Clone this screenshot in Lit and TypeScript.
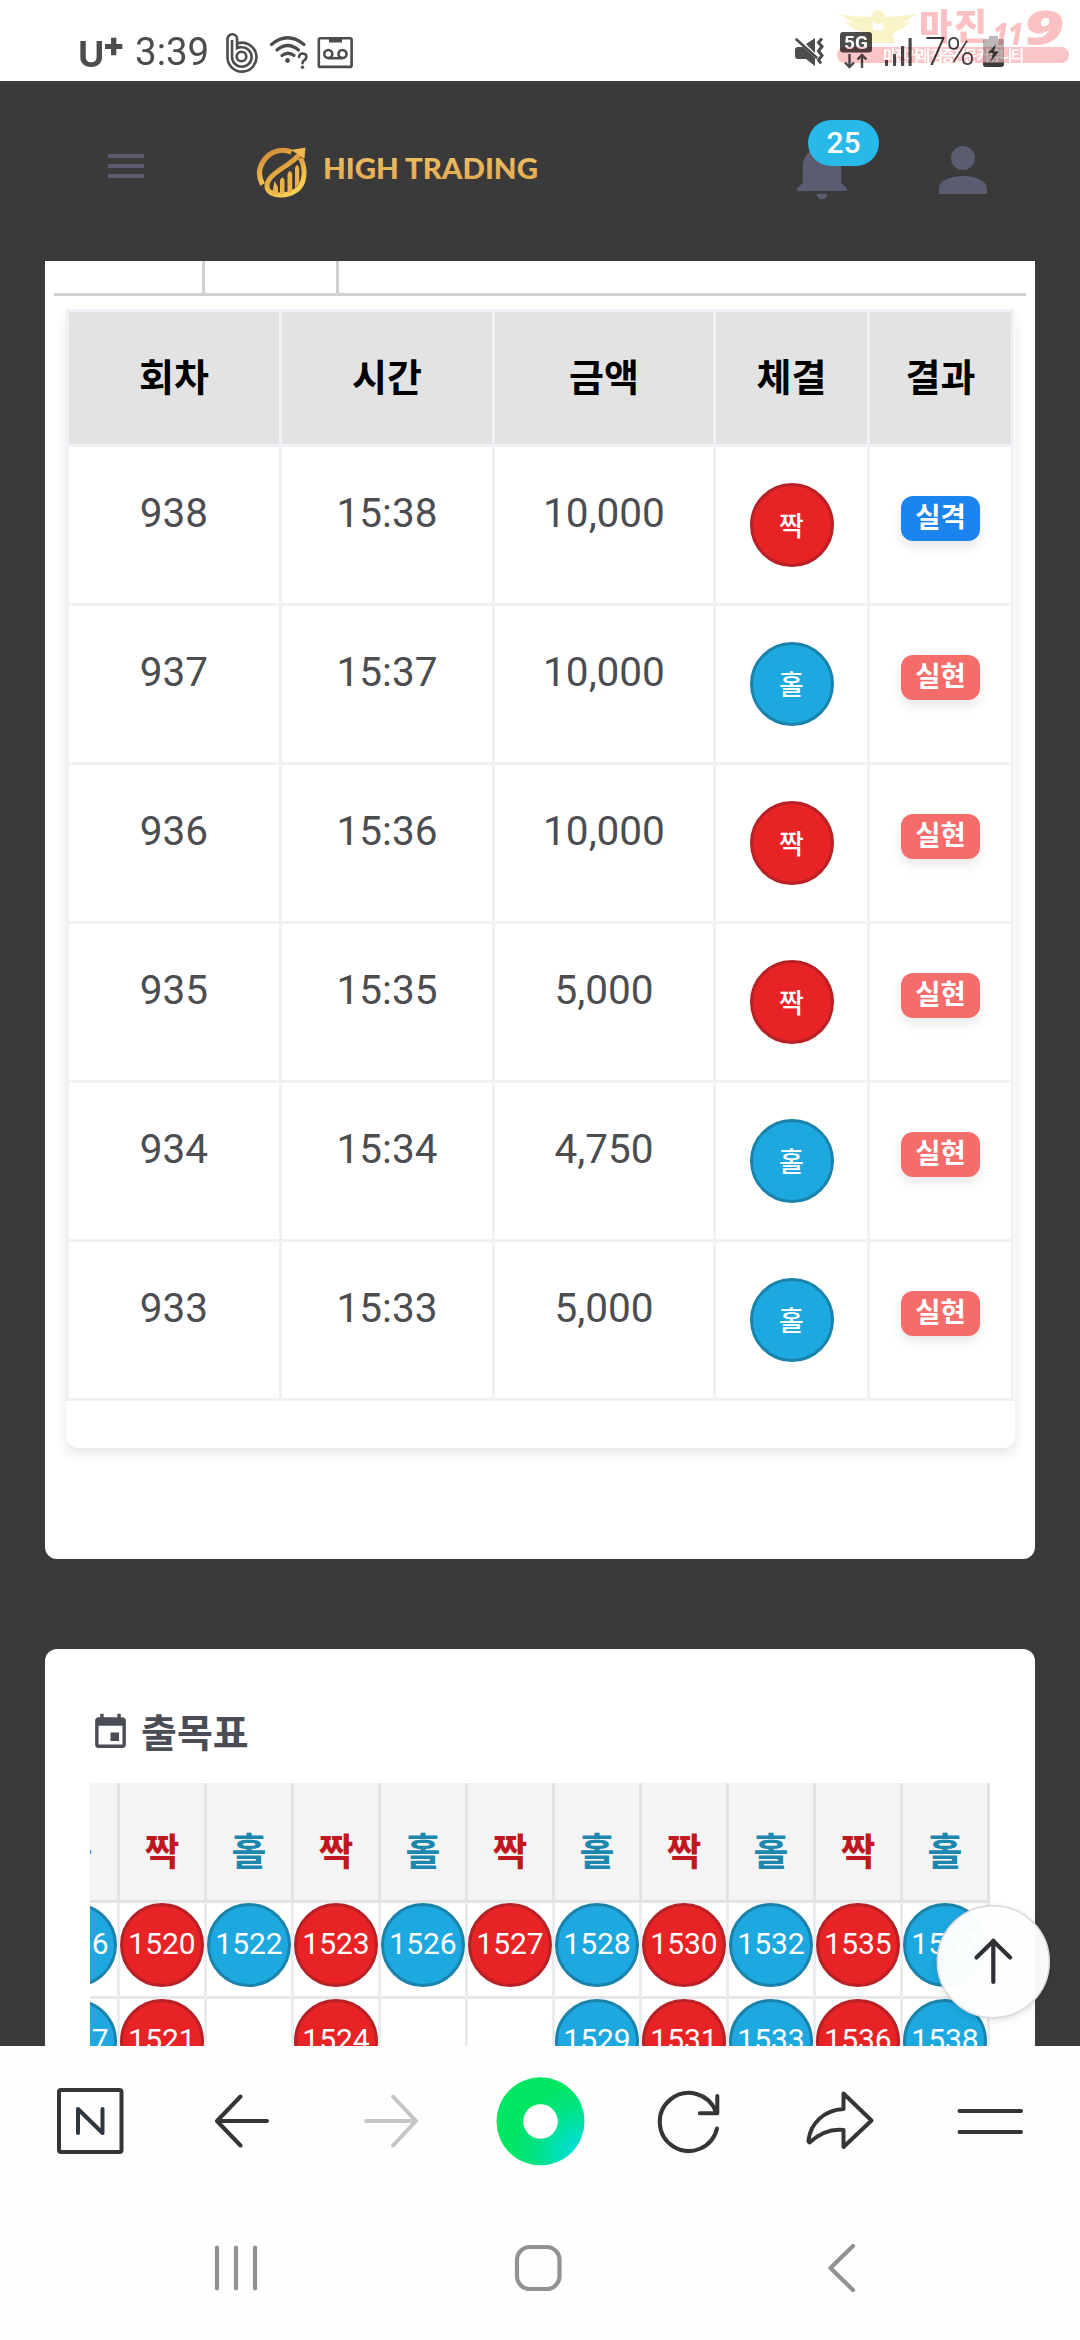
import { LitElement, html, svg, css } from "lit";
import { customElement } from "lit/decorators.js";
import { classMap } from "lit/directives/class-map.js";

type Side = "even" | "odd";

interface Trade {
  round: string;
  time: string;
  amount: string;
  side: Side;
  won: boolean;
}

interface PatternColumn {
  side: Side;
  first: string;
  second: string;
}

const LABEL: Record<Side, string> = { even: "짝", odd: "홀" };

const TRADES: Trade[] = [
  { round: "938", time: "15:38", amount: "10,000", side: "even", won: false },
  { round: "937", time: "15:37", amount: "10,000", side: "odd", won: true },
  { round: "936", time: "15:36", amount: "10,000", side: "even", won: true },
  { round: "935", time: "15:35", amount: "5,000", side: "even", won: true },
  { round: "934", time: "15:34", amount: "4,750", side: "odd", won: true },
  { round: "933", time: "15:33", amount: "5,000", side: "odd", won: true },
];

const PATTERN: PatternColumn[] = [
  { side: "odd", first: "1516", second: "1517" },
  { side: "even", first: "1520", second: "1521" },
  { side: "odd", first: "1522", second: "" },
  { side: "even", first: "1523", second: "1524" },
  { side: "odd", first: "1526", second: "" },
  { side: "even", first: "1527", second: "" },
  { side: "odd", first: "1528", second: "1529" },
  { side: "even", first: "1530", second: "1531" },
  { side: "odd", first: "1532", second: "1533" },
  { side: "even", first: "1535", second: "1536" },
  { side: "odd", first: "1537", second: "1538" },
];

@customElement("status-bar")
class StatusBar extends LitElement {
  static styles = css`
    :host { display: block; position: relative; height: 81px; background: #fff; color: #4c4c4c; overflow: hidden; isolation: isolate; }
    .bar { display: flex; justify-content: space-between; align-items: flex-start; height: 81px; }
    .side { display: flex; align-items: flex-start; height: 81px; }
    .left { padding-left: 78px; }
    .right { padding-right: 71px; }
    svg { display: block; flex: none; }
    .carrier { width: 57px; white-space: nowrap; font: 700 36px/40px Inter, sans-serif; padding-top: 34px; }
    .plus { display: inline-block; font: 900 33px/30px Inter, sans-serif; transform: translate(-2px, -11px); }
    .clock { width: 84px; font: 400 38.5px/44px Roboto, sans-serif; padding-top: 30px; }
    .battery { width: 56px; font: 300 38.5px/44px Roboto, sans-serif; padding-top: 30px; color: #3c3c3c; }
    .mark { position: absolute; left: 830px; top: 0; mix-blend-mode: multiply; }
  `;

  render() {
    return html`
      <div class="bar">
        <div class="side left">
          <div class="carrier">U<span class="plus">+</span></div>
          <div class="clock">3:39</div>
          <svg width="44" height="81" viewBox="219 0 44 81" fill="none" stroke="#4c4c4c" stroke-width="2.6">
            <path d="M227.5 56V39a4.8 4.8 0 0 1 9.6 0v4.5A14.5 14.5 0 1 1 227.5 56z" />
            <path d="M232 40v17a9.8 9.8 0 1 0 9.8-9.8q-2.500-.2-4.700.9v-4" />
            <circle cx="241.500" cy="56.500" r="4.800" />
          </svg>
          <svg width="50" height="81" viewBox="263 0 50 81" fill="none" stroke="#4c4c4c" stroke-width="3.200" stroke-linecap="round">
            <path d="M271.500 44.500q16-13.500 32.500 0M277 50q10.500-9 21.500 0M282 55.500q6-4.500 12 0" />
            <circle cx="287.500" cy="60.500" r="2.400" fill="#4c4c4c" stroke="none" />
            <path d="M299 57q.3-3.500 3.700-3.500 3.800.2 3.700 3.500-.2 2-2.200 3.300-1.700 1.200-1.700 3" stroke-width="2.600" />
            <circle cx="302.500" cy="67.300" r="1.700" fill="#4c4c4c" stroke="none" />
          </svg>
          <svg width="46" height="81" viewBox="313 0 46 81" fill="none" stroke="#4c4c4c" stroke-width="2.600">
            <rect x="318.800" y="38.300" width="32.800" height="28.600" rx="1.500" />
            <path d="M329 40.500h13" stroke-width="4" />
            <circle cx="328.300" cy="54" r="4" />
            <circle cx="342.500" cy="54" r="4" />
            <path d="M328.300 58.200h14.200" />
          </svg>
        </div>
        <div class="side right">
          <svg width="45" height="81" viewBox="790 0 45 81" fill="#4c4c4c">
            <path d="M806 44l9-6v15zM795 50q0-3 3-3h5l12 11v8l-9-7h-8q-3 0-3-3z" />
            <path d="M796.500 39.500l20 18" stroke="#4c4c4c" stroke-width="2.600" stroke-linecap="round" />
            <path d="M822 38.500l-3.500 4 3.500 4-3.500 4.500 3.500 4.500-3.500 4.500 2.500 3.500" fill="none" stroke="#4c4c4c" stroke-width="3" />
          </svg>
          <svg width="45" height="81" viewBox="835 0 45 81">
            <rect x="840" y="32" width="32" height="20.500" rx="3" fill="#4c4c4c" />
            <text x="856" y="48.700" font-family="Roboto" font-weight="700" font-size="19" fill="#fff" text-anchor="middle">5G</text>
            <path d="M849.500 54v13m-4.500-4.500l4.500 4.500 4.500-4.500M862 68V55m-4.500 4.500l4.500-4.500 4.500 4.500" fill="none" stroke="#4c4c4c" stroke-width="2.400" />
          </svg>
          <svg width="45" height="81" viewBox="880 0 45 81" fill="#4c4c4c">
            <rect x="885" y="60" width="3" height="6" />
            <rect x="893" y="54" width="3" height="12" />
            <rect x="901" y="46" width="3.200" height="20" />
            <rect x="908.500" y="38" width="3.200" height="28" />
          </svg>
          <div class="battery">7%</div>
          <svg width="28" height="81" viewBox="981 0 28 81">
            <path d="M989 36h9v3h4q2 0 2 2v23q0 3-3 3h-15q-3 0-3-3V41q0-2 2-2h4z" fill="#bdb8b8" />
            <path d="M983 62.500h21V64q0 3-3 3h-15q-3 0-3-3z" fill="#3c3c3c" />
            <path d="M996 44l-8 9h5l-2.500 9 8.500-10.500h-5z" fill="#3c3c3c" />
          </svg>
        </div>
      </div>
      <svg class="mark" width="250" height="81" viewBox="830 0 250 81">
        <g fill="#f9f3c8">
          <path d="M838 14q20 3 36 3l-3 12-13-3-4-3zM918 14q-20 3-36 3l3 12 13-3 4-3z" />
          <path d="M845 22l28 2v6h-18zM911 22l-28 2v6h18zM858 30h40l-6 5 3 8h-31l4-8z" />
          <circle cx="878" cy="17" r="7" />
        </g>
        <rect x="837" y="47" width="232" height="16" rx="8" fill="#fbc4c6" />
        <text x="883" y="60.500" font-family="Noto Sans CJK KR" font-weight="700" font-size="14.500" fill="#fff" textLength="141">마진거래 검증전문 커뮤니티</text>
        <g fill="#fbc0c2">
          <text x="919" y="40" font-family="Noto Sans CJK KR" font-weight="900" font-size="36" textLength="68">마진</text>
          <text x="993" y="45" font-family="Open Sans" font-weight="800" font-style="italic" font-size="30" textLength="30" lengthAdjust="spacingAndGlyphs">11</text>
          <text x="1024" y="45" font-family="Open Sans" font-weight="800" font-style="italic" font-size="48" textLength="40" lengthAdjust="spacingAndGlyphs">9</text>
        </g>
      </svg>
    `;
  }
}

@customElement("site-header")
class SiteHeader extends LitElement {
  static styles = css`
    :host { display: block; height: 180px; background: #3a3a3a; }
    .row { display: flex; align-items: flex-start; height: 180px; padding-left: 108px; box-sizing: border-box; }
    svg { display: block; flex: none; }
    .menu { display: flex; flex-direction: column; gap: 6px; width: 36px; margin-top: 73px; }
    .menu i { display: block; height: 4px; background: #5c5c70; }
    .logo { margin: 61px 0 0 108px; }
    .bell { position: relative; margin: 55px 0 0 237px; width: 66px; height: 66px; }
    .count { position: absolute; left: 19px; top: -16px; width: 71px; height: 46px; border-radius: 23px; background: #29b9e8; color: #fff; text-align: center; font: 500 30px/46px Roboto, sans-serif; }
    .user { margin: 53px 0 0 72px; }
  `;

  render() {
    return html`
      <div class="row">
        <div class="menu"><i></i><i></i><i></i></div>
        <svg class="logo" width="300" height="60" viewBox="252 142 300 60">
          <defs>
            <linearGradient id="gold" x1="0" y1="0" x2="0.500" y2="1">
              <stop offset="0" stop-color="#cf8132" />
              <stop offset="1" stop-color="#f8cf55" />
            </linearGradient>
            <linearGradient id="word" x1="0" y1="0" x2="0" y2="1">
              <stop offset="0" stop-color="#eec268" />
              <stop offset="1" stop-color="#e3a64c" />
            </linearGradient>
          </defs>
          <path d="M262.500 184.500Q256 172 263.500 161C270 151 282 148 291.500 152" fill="none" stroke="url(#gold)" stroke-width="5.200" />
          <path d="M300.500 158C306.500 170 305 184 296 190.500C286 197 271 196.500 267.500 189C264 180 276 172 287 165Q294 160.500 300 154" fill="none" stroke="url(#gold)" stroke-width="5" />
          <path d="M291 150L305.500 147.500 304.500 158.500Z" fill="#efb851" />
          <g fill="#eeb24a">
            <path d="M272 194l2.500-13 3.500 6v8zM280 194v-14q2.500-5 4.500 0v14zM287.500 193v-19q2.500-6 4.700 0v18zM295 188v-20q2-6 4.200 0v15z" />
          </g>
          <text x="323" y="179" font-family="Lato" font-weight="900" font-size="27.500" fill="url(#word)" textLength="215" lengthAdjust="spacingAndGlyphs">HIGH TRADING</text>
        </svg>
        <div class="bell">
          <svg width="66" height="66" viewBox="0 0 24 24" fill="#5a5c70">
            <path d="M21,19V20H3V19L5,17V11C5,7.9 7.03,5.17 10,4.29C10,4.19 10,4.1 10,4A2,2 0 0,1 12,2A2,2 0 0,1 14,4C14,4.1 14,4.19 14,4.29C16.97,5.17 19,7.9 19,11V17L21,19M14,21A2,2 0 0,1 12,23A2,2 0 0,1 10,21" />
          </svg>
          <div class="count">25</div>
        </div>
        <svg class="user" width="72" height="72" viewBox="0 0 24 24" fill="#5a5c70">
          <path d="M12,4A4,4 0 0,1 16,8A4,4 0 0,1 12,12A4,4 0 0,1 8,8A4,4 0 0,1 12,4M12,14C16.42,14 20,15.79 20,18V20H4V18C4,15.79 7.58,14 12,14Z" />
        </svg>
      </div>
    `;
  }
}

@customElement("trade-history")
class TradeHistory extends LitElement {
  static styles = css`
    :host { display: block; height: 1298px; box-sizing: border-box; padding: 0 9px; background: #fff; border-radius: 0 0 12px 12px; }
    .tabs { display: flex; height: 35px; box-sizing: border-box; border-bottom: 3px solid #d0d0d0; }
    .tab { box-sizing: border-box; border-right: 3px solid #d0d0d0; }
    .tab.first { width: 151px; }
    .tab.second { width: 134px; }
    .sheet { margin: 13px 11px 0 12px; height: 1139px; border-radius: 12px; box-shadow: 0 6px 12px rgba(0, 0, 0, 0.1); color: #4b4d51; }
    .row { display: grid; grid-template-columns: 213px 213px 221px 154px 144px; width: 948px; box-sizing: border-box; height: 159px; border-left: 3px solid #f1f1f2; border-bottom: 3px solid #f1f1f2; }
    .cell { border-right: 3px solid #f1f1f2; padding-top: 36px; text-align: center; font: 400 40.5px/60px Roboto, sans-serif; }
    .row.head { height: 138px; border-top: 3px solid #f1f3f6; border-color: #eef2f6; }
    .head .cell { padding-top: 0; background: #e3e3e4; border-color: #eef2f6; color: #000; font: 700 38px/125px "Noto Sans CJK KR", sans-serif; }
    .ball { width: 84px; height: 84px; box-sizing: border-box; margin: 0 auto; border: 3px solid; border-radius: 50%; color: #fff; font: 500 27px/78px "Noto Sans CJK KR", sans-serif; }
    .ball.even { background: #e72325; border-color: #b72024; }
    .ball.odd { background: #1da8df; border-color: #1a83ac; }
    .badge { width: 79px; height: 45px; margin: 13px auto 0; border-radius: 12px; background: #f46d6b; color: #fff; box-shadow: 0 6px 12px rgba(0, 0, 0, 0.09); font: 700 27.500px/39px "Noto Sans CJK KR", sans-serif; }
    .badge.lost { background: #1c84ee; }
  `;

  render() {
    return html`
      <div class="tabs"><div class="tab first"></div><div class="tab second"></div></div>
      <div class="sheet">
        <div class="row head">
          ${["회차", "시간", "금액", "체결", "결과"].map((name) => html`<div class="cell">${name}</div>`)}
        </div>
        ${TRADES.map(
          (trade) => html`
            <div class="row">
              <div class="cell">${trade.round}</div>
              <div class="cell">${trade.time}</div>
              <div class="cell">${trade.amount}</div>
              <div class="cell"><div class="ball ${trade.side}">${LABEL[trade.side]}</div></div>
              <div class="cell">
                <div class=${classMap({ badge: true, lost: !trade.won })}>${trade.won ? "실현" : "실격"}</div>
              </div>
            </div>
          `
        )}
      </div>
    `;
  }
}

@customElement("pattern-board")
class PatternBoard extends LitElement {
  static styles = css`
    :host { display: block; height: 397px; box-sizing: border-box; padding: 0 45px; background: #fff; border-radius: 12px 12px 0 0; overflow: hidden; }
    .title { display: flex; align-items: flex-start; height: 134px; box-sizing: border-box; padding-top: 63px; color: #4a4d55; font: 700 39px/36px "Noto Sans CJK KR", sans-serif; }
    .title svg { display: block; margin-right: 10px; }
    .board { display: flex; justify-content: flex-end; width: 900px; overflow: hidden; }
    .column { flex: none; width: 87px; box-sizing: border-box; border-right: 3px solid #ebecef; }
    .head { height: 120px; box-sizing: border-box; margin-right: -3px; background: #f4f4f4; border-right: 3px solid #e3e3e3; border-bottom: 3px solid #e3e3e3; text-align: center; font: 700 38px/132px "Noto Sans CJK KR", sans-serif; }
    .even .head { color: #c01820; }
    .odd .head { color: #1d87ae; }
    .slot { height: 96px; box-sizing: border-box; border-bottom: 3px solid #e8e8ea; }
    .ball { width: 84px; height: 84px; box-sizing: border-box; border: 3px solid; border-radius: 50%; color: #fff; text-align: center; font: 400 30px/75px Roboto, sans-serif; }
    .even .ball { background: #e72325; border-color: #b72024; }
    .odd .ball { background: #1da8df; border-color: #1a83ac; }
  `;

  private slotFor(value: string) {
    return html`<div class="slot">${value ? html`<div class="ball">${value}</div>` : ""}</div>`;
  }

  render() {
    return html`
      <div class="title">
        <svg width="41" height="41" viewBox="0 0 24 24" fill="#4a4d55">
          <path d="M19,19H5V8H19M16,1V3H8V1H6V3H5C3.89,3 3,3.89 3,5V19A2,2 0 0,0 5,21H19A2,2 0 0,0 21,19V5C21,3.89 20.1,3 19,3H18V1M17,12H12V17H17V12Z" />
        </svg>
        <span>출목표</span>
      </div>
      <div class="board">
        ${PATTERN.map(
          (column) => html`
            <div class="column ${column.side}">
              <div class="head">${LABEL[column.side]}</div>
              ${this.slotFor(column.first)} ${this.slotFor(column.second)}
            </div>
          `
        )}
      </div>
    `;
  }
}

@customElement("browser-toolbar")
class BrowserToolbar extends LitElement {
  static styles = css`
    :host { display: block; height: 294px; background: #fefefe; }
    .tools { display: grid; grid-template-columns: repeat(7, 150px); padding: 0 15px; }
    .system { display: grid; grid-template-columns: repeat(3, 302px); padding-left: 85px; }
    svg { display: block; fill: none; stroke: #353535; stroke-width: 4; stroke-linecap: round; stroke-linejoin: round; }
    .off { stroke: #c5c5c5; }
    .system svg { stroke: #929292; stroke-width: 4.200; }
  `;

  private tool(index: number, content: unknown, name = "") {
    return html`<svg class=${name} width="150" height="150" viewBox="${15 + index * 150} 2046 150 150">${content}</svg>`;
  }

  private system(index: number, content: unknown) {
    return html`<svg width="302" height="144" viewBox="${85 + index * 302} 2196 302 144">${content}</svg>`;
  }

  render() {
    return html`
      <div class="tools">
        ${this.tool(0, svg`<rect x="59" y="2090" width="62.500" height="62" rx="2" /><path d="M78 2133v-24l24.500 24v-24" stroke="#2e3740" />`)}
        ${this.tool(1, svg`<path d="M267 2121h-50l23.500-24.500M217 2121l23.500 24.500" />`)}
        ${this.tool(2, svg`<path d="M366 2121h50l-23-24.500M416 2121l-23 24.500" />`, "off")}
        ${this.tool(
          3,
          svg`<defs><radialGradient id="green" cx="1" cy=".9" r=".85"><stop offset="0" stop-color="#00dcf0" /><stop offset=".25" stop-color="#00dfc8" /><stop offset=".7" stop-color="#00e37e" /><stop offset="1" stop-color="#00e763" /></radialGradient></defs>
            <circle cx="540.500" cy="2121.300" r="44" fill="url(#green)" stroke="none" /><circle cx="540.500" cy="2121.500" r="17.300" fill="#fff" stroke="none" />`
        )}
        ${this.tool(4, svg`<path d="M717 2128.500A29 29 0 1 1 716 2112M717.300 2096v17.300h-17.500" />`)}
        ${this.tool(5, svg`<path d="M843.500 2093.500l28 27-28 26.500v-17q-18-2-34 12.500-1.200-.5-1-2.500c2-16 15-30 35-31z" />`)}
        ${this.tool(6, svg`<path d="M959.500 2111h61.500M959.500 2132h61.500" />`)}
      </div>
      <div class="system">
        ${this.system(0, svg`<path d="M217 2247.500v41M236 2247.500v41M255 2247.500v41" />`)}
        ${this.system(1, svg`<rect x="517" y="2247" width="42.500" height="42" rx="13" />`)}
        ${this.system(2, svg`<path d="M853 2246l-22.500 22 22.500 22" />`)}
      </div>
    `;
  }
}

@customElement("app-root")
class AppRoot extends LitElement {
  static styles = css`
    :host { display: block; width: 1080px; height: 2340px; overflow: hidden; background: #3a3a3a; }
    .page { position: relative; height: 1785px; box-sizing: border-box; padding: 0 45px; display: flex; flex-direction: column; gap: 90px; }
    .top { position: absolute; left: 936px; top: 1643px; }
    .top svg { display: block; filter: drop-shadow(0 2px 3px rgba(0, 0, 0, 0.12)); }
  `;

  render() {
    return html`
      <status-bar></status-bar>
      <site-header></site-header>
      <div class="page">
        <trade-history></trade-history>
        <pattern-board></pattern-board>
        <div class="top">
          <svg width="116" height="116" viewBox="0 0 116 116" fill="none">
            <circle cx="57.300" cy="57.700" r="56" fill="#fff" fill-opacity=".97" stroke="#d9d9dc" stroke-width="1.500" />
            <path d="M57.300 78V36.500M40.500 53.500l16.800-16.500 16.800 16.500" stroke="#2f3136" stroke-width="4.200" stroke-linecap="round" stroke-linejoin="round" />
          </svg>
        </div>
      </div>
      <browser-toolbar></browser-toolbar>
    `;
  }
}
